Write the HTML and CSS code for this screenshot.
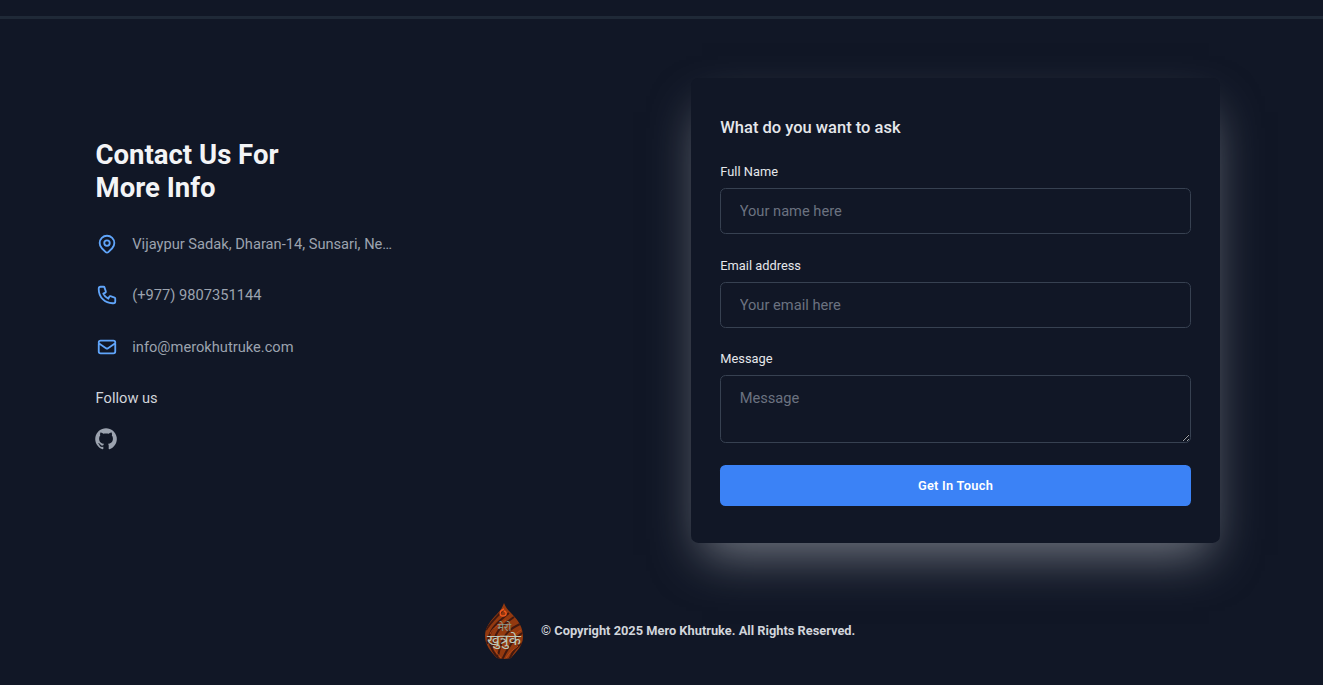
FILE: index.html
```html
<!DOCTYPE html>
<html lang="en">
<head>
<meta charset="utf-8">
<title>Mero Khutruke</title>
<link rel="stylesheet" href="styles.css">
</head>
<body>
<div class="divider"></div>
<section class="contact">
  <div class="info">
    <h1 class="title">Contact Us For<br>More Info</h1>
    <p class="info-row">
      <svg class="icon" viewBox="0 0 24 24"><path d="M17.657 16.657L13.414 20.9a1.998 1.998 0 01-2.827 0l-4.244-4.243a8 8 0 1111.314 0z"/><path d="M15 11a3 3 0 11-6 0 3 3 0 016 0z"/></svg>
      <span class="info-text">Vijaypur Sadak, Dharan-14, Sunsari, Ne…</span>
    </p>
    <p class="info-row">
      <svg class="icon" viewBox="0 0 24 24"><path d="M3 5a2 2 0 012-2h3.28a1 1 0 01.948.684l1.498 4.493a1 1 0 01-.502 1.21l-2.257 1.13a11.042 11.042 0 005.516 5.516l1.13-2.257a1 1 0 011.21-.502l4.493 1.498a1 1 0 01.684.949V19a2 2 0 01-2 2h-1C9.716 21 3 14.284 3 6V5z"/></svg>
      <span class="info-text">(+977) 9807351144</span>
    </p>
    <p class="info-row">
      <svg class="icon" viewBox="0 0 24 24"><path d="M3 8l7.89 5.26a2 2 0 002.22 0L21 8M5 19h14a2 2 0 002-2V7a2 2 0 00-2-2H5a2 2 0 00-2 2v10a2 2 0 002 2z"/></svg>
      <span class="info-text">info@merokhutruke.com</span>
    </p>
    <h3 class="follow">Follow us</h3>
    <a class="social" href="#" aria-label="GitHub">
      <svg class="github" viewBox="0 0 24 24"><path d="M12.026 2C7.13295 1.99937 2.96183 5.54799 2.17842 10.3779C1.395 15.2079 4.23061 19.893 8.87302 21.439C9.37302 21.529 9.55202 21.222 9.55202 20.958C9.55202 20.721 9.54402 20.093 9.54102 19.258C6.76602 19.858 6.18002 17.92 6.18002 17.92C5.99733 17.317 5.60459 16.7993 5.07302 16.461C4.17302 15.842 5.14202 15.856 5.14202 15.856C5.78269 15.9438 6.34657 16.3235 6.66902 16.884C6.94195 17.3803 7.40177 17.747 7.94632 17.9026C8.49087 18.0583 9.07503 17.99 9.56902 17.713C9.61544 17.207 9.84055 16.7341 10.204 16.379C7.99002 16.128 5.66202 15.272 5.66202 11.449C5.64973 10.4602 6.01691 9.5043 6.68802 8.778C6.38437 7.91731 6.42013 6.97325 6.78802 6.138C6.78802 6.138 7.62502 5.869 9.53002 7.159C11.1639 6.71101 12.8882 6.71101 14.522 7.159C16.428 5.868 17.264 6.138 17.264 6.138C17.6336 6.97286 17.6694 7.91757 17.364 8.778C18.0376 9.50423 18.4045 10.4626 18.388 11.453C18.388 15.286 16.058 16.128 13.836 16.375C14.3153 16.8651 14.5612 17.5373 14.511 18.221C14.511 19.555 14.499 20.631 14.499 20.958C14.499 21.225 14.677 21.535 15.186 21.437C19.8265 19.8884 22.6591 15.203 21.874 10.3743C21.089 5.54565 16.9181 1.99888 12.026 2Z"/></svg>
    </a>
  </div>
  <form class="card">
    <h2 class="card-title">What do you want to ask</h2>
    <label class="field"><span class="label">Full Name</span><input class="input" type="text" placeholder="Your name here"></label>
    <label class="field"><span class="label">Email address</span><input class="input" type="email" placeholder="Your email here"></label>
    <label class="field"><span class="label">Message</span><textarea class="input area" placeholder="Message"></textarea></label>
    <button class="submit" type="button">Get In Touch</button>
  </form>
</section>
<footer class="footer">
  <svg class="logo" viewBox="0 0 40 58">
    <defs><clipPath id="drop"><path d="M20 1C22 6 24 8 28 12C35 19 39 26 39 35C39 44 32 50 27 56Q20 58 13 56C7 50 1 43 1 34C1 25 7 18 13 12C17 8 18 6 20 1Z"/></clipPath></defs>
    <g clip-path="url(#drop)">
      <path class="drop-fill" d="M0 0H40V58H0Z"/>
      <path class="drop-dark" d="M25 11C13 21 6 25 3 42M30 15C18 24 11 27 8 48M36 22C25 27 18 33 14 54M40 30C32 34 25 43 18 58M39 41C34 43 28 50 25 58M18 9C13 15 7 20 2 28M5 39Q8 50 16 58"/>
      <path class="drop-glow" d="M22 18C14 24 9 25 6 32M37 28L30 33M9 45Q13 52 17 56M34 44Q25 50 22 56"/>
      <path class="drop-spark" d="M20 7C15 9 15 14 19 14S23 10 20 9"/>
    </g>
    <text class="logo-small" x="20.500" y="29" text-anchor="middle">मेरो</text>
    <text class="logo-big" x="20" y="43" text-anchor="middle" textLength="34" lengthAdjust="spacingAndGlyphs">खुत्रुके</text>
  </svg>
  <p class="copyright">© Copyright 2025 Mero Khutruke. All Rights Reserved.</p>
</footer>
</body>
</html>
```
FILE: styles.css
```css
html { font-size: 14.6667px; }
* { box-sizing: border-box; }
body {
  margin: 0;
  padding-top: 16px;
  height: 685px;
  overflow: hidden;
  background: #111726;
  font-family: Roboto, "Liberation Sans", sans-serif;
  font-size: 1rem;
  line-height: 1.5;
}
h1, h2, h3, p { margin: 0; }
.divider { height: 3px; background: #1f2937; }
.contact {
  display: grid;
  grid-template-columns: 529px 529px;
  justify-content: space-between;
  padding: 59px 103px 0 95.6px;
}
.info { padding-top: 59.6px; }
.title { color: #f3f4f6; font-size: 1.875rem; line-height: 33px; font-weight: 700; }
.info-row { display: flex; align-items: center; gap: 1rem; margin-top: 2rem; height: 22px; }
.icon { width: 22px; height: 22px; flex: none; fill: none; stroke: #60a5fa; stroke-width: 2; stroke-linecap: round; stroke-linejoin: round; }
.info-text { width: 18rem; white-space: nowrap; color: #9ca3af; }
.follow { margin-top: 2rem; color: #d1d5db; font-size: 1rem; font-weight: 400; line-height: 22px; }
.social { display: block; width: 24px; margin: 17px 0 0 -2.6px; }
.github { display: block; width: 26px; height: 26px; fill: #9ca3af; }
.card {
  height: 465px;
  padding: 37px 29.33px 0;
  border-radius: 7.33px;
  background: #111726;
  box-shadow: 0 23px 46px -11px rgba(209, 213, 219, 0.5);
}
.card-title { color: #e5e7eb; font-size: 1.125rem; font-weight: 500; line-height: 25.67px; }
.field { display: block; margin-top: 22.8px; }
.card-title + .field { margin-top: 22.4px; }
.label { display: block; color: #e5e7eb; font-size: 0.875rem; line-height: 18.33px; margin-bottom: 6.53px; }
.input {
  display: block;
  width: 100%;
  height: 46px;
  padding: 11px 18.33px;
  border: 1px solid #374151;
  border-radius: 5.5px;
  outline: 0;
  background: #111726;
  color: #d1d5db;
  font: inherit;
}
.input::placeholder { color: #6b7280; opacity: 1; }
.area { height: 68px; resize: vertical; }
.submit {
  display: block;
  width: 100%;
  height: 40.33px;
  margin-top: 22.2px;
  border: 0;
  border-radius: 5.5px;
  background: #3b82f6;
  color: #fff;
  font-family: inherit;
  font-size: 0.875rem;
  font-weight: 600;
  letter-spacing: 0.02em;
}
.footer { display: flex; align-items: center; margin: 59px 0 0 484px; gap: 17px; }
.logo { width: 40px; height: 58px; }
.copyright { color: #d1d5db; font-size: 0.875rem; font-weight: 700; line-height: 18px; }
.drop-fill { fill: #93390f; }
.drop-dark { fill: none; stroke: #43190f; stroke-width: 2; }
.drop-glow { fill: none; stroke: #b84a18; stroke-width: 1; }
.drop-spark { fill: none; stroke: #f0561c; stroke-width: 1.4; }
.logo-small, .logo-big { font-family: "Noto Sans Devanagari", "Noto Sans", sans-serif; }
.logo-small { fill: #8f9a8c; font-size: 11px; }
.logo-big { fill: #bccabc; font-size: 15px; }
```
